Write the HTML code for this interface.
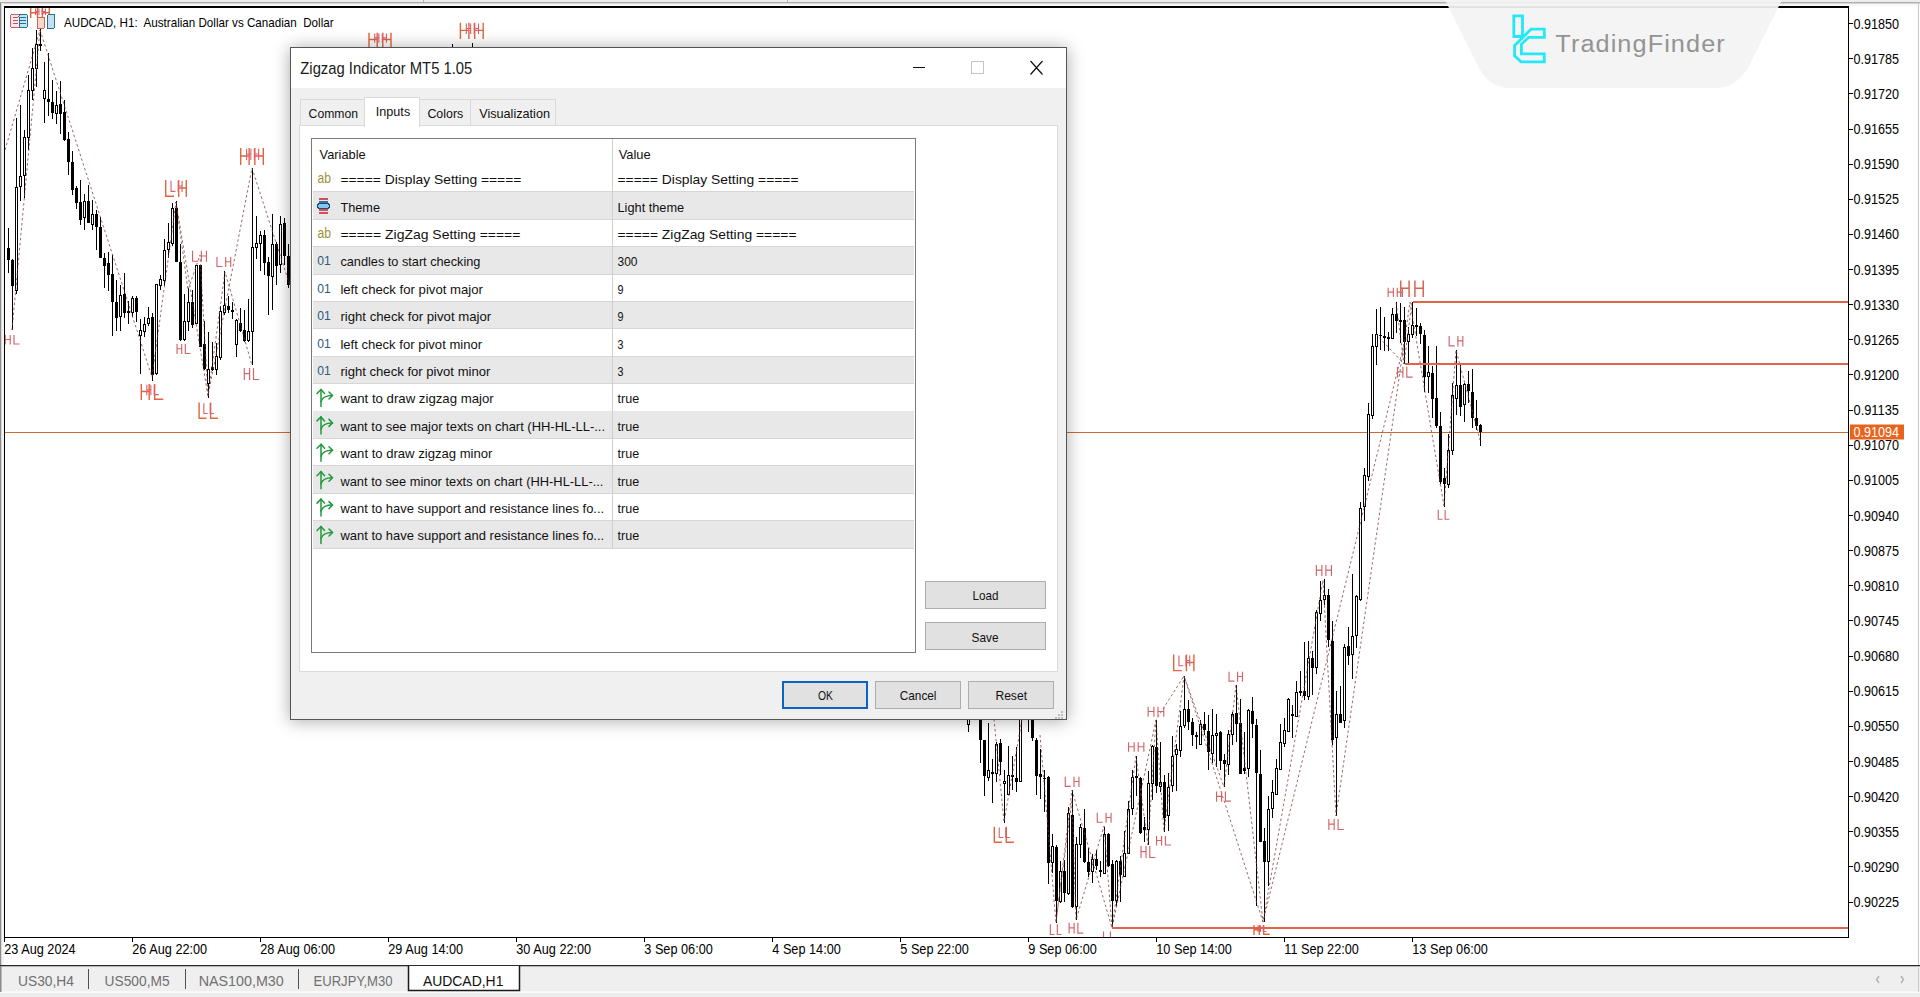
<!DOCTYPE html>
<html><head><meta charset="utf-8">
<style>
*{margin:0;padding:0;box-sizing:border-box}
html,body{width:1920px;height:997px;overflow:hidden;background:#fff;font-family:"Liberation Sans",sans-serif;position:relative}
.a{position:absolute}
</style></head><body>
<svg class="a" style="left:0;top:0" width="1920" height="997" viewBox="0 0 1920 997" font-family='"Liberation Sans", sans-serif'>
<rect x="0" y="0" width="1920" height="997" fill="#fff"/>
<rect x="0" y="0" width="1920" height="3" fill="#ededed"/>
<rect x="0" y="2.5" width="1920" height="1" fill="#707070"/>
<rect x="0" y="3.5" width="1920" height="2.5" fill="#f7f7f7"/>
<rect x="0" y="3" width="1.5" height="962" fill="#8a8a8a"/>
<rect x="1.5" y="3" width="2.5" height="962" fill="#f4f4f4"/>
<rect x="1918" y="3" width="1" height="962" fill="#c8c8c8"/>
<rect x="423" y="0" width="1" height="3" fill="#b0b0b0"/>
<rect x="787" y="0" width="1" height="3" fill="#b0b0b0"/>
<defs><clipPath id="cc"><rect x="5" y="7" width="1843" height="930"/></clipPath></defs>
<g clip-path="url(#cc)" shape-rendering="crispEdges">
<rect x="5" y="431.5" width="1843" height="1" fill="#cf6a35"/>
<rect x="8" y="228" width="1" height="45" fill="#000"/>
<rect x="7" y="248" width="3" height="12" fill="#000"/>
<rect x="12" y="259" width="1" height="71" fill="#000"/>
<rect x="11" y="260" width="3" height="26" fill="#000"/>
<rect x="16" y="118" width="1" height="176" fill="#000"/>
<rect x="15.5" y="187.5" width="2" height="103" fill="#fff" stroke="#000" stroke-width="1"/>
<rect x="20" y="105" width="1" height="96" fill="#000"/>
<rect x="19.5" y="176.5" width="2" height="10" fill="#fff" stroke="#000" stroke-width="1"/>
<rect x="24" y="130" width="1" height="68" fill="#000"/>
<rect x="23.5" y="137.5" width="2" height="38" fill="#fff" stroke="#000" stroke-width="1"/>
<rect x="28" y="75" width="1" height="75" fill="#000"/>
<rect x="27.5" y="90.5" width="2" height="47" fill="#fff" stroke="#000" stroke-width="1"/>
<rect x="32" y="48" width="1" height="52" fill="#000"/>
<rect x="31.5" y="68.5" width="2" height="22" fill="#fff" stroke="#000" stroke-width="1"/>
<rect x="36" y="30" width="1" height="57" fill="#000"/>
<rect x="35.5" y="44.5" width="2" height="24" fill="#fff" stroke="#000" stroke-width="1"/>
<rect x="40" y="28" width="1" height="23" fill="#000"/>
<rect x="39" y="44" width="3" height="2" fill="#000"/>
<rect x="44" y="62" width="1" height="61" fill="#000"/>
<rect x="43.5" y="90.5" width="2" height="8" fill="#fff" stroke="#000" stroke-width="1"/>
<rect x="48" y="53" width="1" height="63" fill="#000"/>
<rect x="47" y="99" width="3" height="3" fill="#000"/>
<rect x="52" y="80" width="1" height="39" fill="#000"/>
<rect x="51" y="102" width="3" height="11" fill="#000"/>
<rect x="56" y="91" width="1" height="33" fill="#000"/>
<rect x="55.5" y="105.5" width="2" height="8" fill="#fff" stroke="#000" stroke-width="1"/>
<rect x="60" y="81" width="1" height="53" fill="#000"/>
<rect x="59" y="104" width="3" height="10" fill="#000"/>
<rect x="64" y="100" width="1" height="41" fill="#000"/>
<rect x="63" y="112" width="3" height="28" fill="#000"/>
<rect x="68" y="132" width="1" height="43" fill="#000"/>
<rect x="67" y="139" width="3" height="23" fill="#000"/>
<rect x="72" y="151" width="1" height="44" fill="#000"/>
<rect x="71" y="162" width="3" height="28" fill="#000"/>
<rect x="76" y="186" width="1" height="23" fill="#000"/>
<rect x="75" y="188" width="3" height="15" fill="#000"/>
<rect x="80" y="180" width="1" height="45" fill="#000"/>
<rect x="79" y="202" width="3" height="18" fill="#000"/>
<rect x="84" y="194" width="1" height="36" fill="#000"/>
<rect x="83.5" y="201.5" width="2" height="16" fill="#fff" stroke="#000" stroke-width="1"/>
<rect x="88" y="185" width="1" height="38" fill="#000"/>
<rect x="87" y="201" width="3" height="22" fill="#000"/>
<rect x="92" y="200" width="1" height="30" fill="#000"/>
<rect x="91.5" y="214.5" width="2" height="10" fill="#fff" stroke="#000" stroke-width="1"/>
<rect x="96" y="210" width="1" height="40" fill="#000"/>
<rect x="95" y="214" width="3" height="13" fill="#000"/>
<rect x="100" y="217" width="1" height="41" fill="#000"/>
<rect x="99" y="227" width="3" height="31" fill="#000"/>
<rect x="104" y="253" width="1" height="35" fill="#000"/>
<rect x="103" y="258" width="3" height="8" fill="#000"/>
<rect x="108" y="252" width="1" height="39" fill="#000"/>
<rect x="107" y="263" width="3" height="12" fill="#000"/>
<rect x="112" y="255" width="1" height="81" fill="#000"/>
<rect x="111" y="274" width="3" height="28" fill="#000"/>
<rect x="116" y="280" width="1" height="51" fill="#000"/>
<rect x="115" y="302" width="3" height="16" fill="#000"/>
<rect x="120" y="285" width="1" height="46" fill="#000"/>
<rect x="119.5" y="295.5" width="2" height="21" fill="#fff" stroke="#000" stroke-width="1"/>
<rect x="124" y="273" width="1" height="45" fill="#000"/>
<rect x="123" y="294" width="3" height="19" fill="#000"/>
<rect x="128" y="301" width="1" height="23" fill="#000"/>
<rect x="127" y="311" width="3" height="2" fill="#000"/>
<rect x="132" y="296" width="1" height="21" fill="#000"/>
<rect x="131.5" y="298.5" width="2" height="14" fill="#fff" stroke="#000" stroke-width="1"/>
<rect x="136" y="296" width="1" height="26" fill="#000"/>
<rect x="135" y="298" width="3" height="14" fill="#000"/>
<rect x="140" y="319" width="1" height="55" fill="#000"/>
<rect x="139.5" y="330.5" width="2" height="5" fill="#fff" stroke="#000" stroke-width="1"/>
<rect x="144" y="317" width="1" height="20" fill="#000"/>
<rect x="143.5" y="324.5" width="2" height="7" fill="#fff" stroke="#000" stroke-width="1"/>
<rect x="148" y="307" width="1" height="19" fill="#000"/>
<rect x="147.5" y="318.5" width="2" height="5" fill="#fff" stroke="#000" stroke-width="1"/>
<rect x="152" y="313" width="1" height="68" fill="#000"/>
<rect x="151" y="317" width="3" height="58" fill="#000"/>
<rect x="156" y="284" width="1" height="91" fill="#000"/>
<rect x="155.5" y="284.5" width="2" height="89" fill="#fff" stroke="#000" stroke-width="1"/>
<rect x="160" y="275" width="1" height="15" fill="#000"/>
<rect x="159.5" y="279.5" width="2" height="6" fill="#fff" stroke="#000" stroke-width="1"/>
<rect x="164" y="239" width="1" height="47" fill="#000"/>
<rect x="163.5" y="250.5" width="2" height="30" fill="#fff" stroke="#000" stroke-width="1"/>
<rect x="168" y="223" width="1" height="35" fill="#000"/>
<rect x="167.5" y="242.5" width="2" height="7" fill="#fff" stroke="#000" stroke-width="1"/>
<rect x="172" y="203" width="1" height="43" fill="#000"/>
<rect x="171.5" y="208.5" width="2" height="35" fill="#fff" stroke="#000" stroke-width="1"/>
<rect x="176" y="201" width="1" height="61" fill="#000"/>
<rect x="175" y="208" width="3" height="54" fill="#000"/>
<rect x="180" y="244" width="1" height="97" fill="#000"/>
<rect x="179" y="262" width="3" height="78" fill="#000"/>
<rect x="184" y="294" width="1" height="47" fill="#000"/>
<rect x="183.5" y="321.5" width="2" height="18" fill="#fff" stroke="#000" stroke-width="1"/>
<rect x="188" y="288" width="1" height="43" fill="#000"/>
<rect x="187.5" y="302.5" width="2" height="19" fill="#fff" stroke="#000" stroke-width="1"/>
<rect x="192" y="290" width="1" height="38" fill="#000"/>
<rect x="191" y="302" width="3" height="23" fill="#000"/>
<rect x="196" y="265" width="1" height="59" fill="#000"/>
<rect x="195.5" y="265.5" width="2" height="58" fill="#fff" stroke="#000" stroke-width="1"/>
<rect x="200" y="265" width="1" height="82" fill="#000"/>
<rect x="199" y="265" width="3" height="82" fill="#000"/>
<rect x="204" y="321" width="1" height="49" fill="#000"/>
<rect x="203" y="344" width="3" height="25" fill="#000"/>
<rect x="208" y="332" width="1" height="66" fill="#000"/>
<rect x="207.5" y="369.5" width="2" height="14" fill="#fff" stroke="#000" stroke-width="1"/>
<rect x="212" y="342" width="1" height="29" fill="#000"/>
<rect x="211" y="367" width="3" height="3" fill="#000"/>
<rect x="216" y="343" width="1" height="32" fill="#000"/>
<rect x="215.5" y="356.5" width="2" height="13" fill="#fff" stroke="#000" stroke-width="1"/>
<rect x="220" y="306" width="1" height="54" fill="#000"/>
<rect x="219.5" y="311.5" width="2" height="46" fill="#fff" stroke="#000" stroke-width="1"/>
<rect x="224" y="271" width="1" height="44" fill="#000"/>
<rect x="223.5" y="305.5" width="2" height="7" fill="#fff" stroke="#000" stroke-width="1"/>
<rect x="228" y="296" width="1" height="17" fill="#000"/>
<rect x="227" y="306" width="3" height="4" fill="#000"/>
<rect x="232" y="302" width="1" height="17" fill="#000"/>
<rect x="231" y="310" width="3" height="2" fill="#000"/>
<rect x="236" y="319" width="1" height="38" fill="#000"/>
<rect x="235.5" y="320.5" width="2" height="24" fill="#fff" stroke="#000" stroke-width="1"/>
<rect x="240" y="308" width="1" height="24" fill="#000"/>
<rect x="239" y="323" width="3" height="8" fill="#000"/>
<rect x="244" y="310" width="1" height="32" fill="#000"/>
<rect x="243" y="330" width="3" height="11" fill="#000"/>
<rect x="248" y="299" width="1" height="43" fill="#000"/>
<rect x="247.5" y="331.5" width="2" height="9" fill="#fff" stroke="#000" stroke-width="1"/>
<rect x="252" y="168" width="1" height="197" fill="#000"/>
<rect x="251.5" y="247.5" width="2" height="84" fill="#fff" stroke="#000" stroke-width="1"/>
<rect x="256" y="216" width="1" height="43" fill="#000"/>
<rect x="255.5" y="243.5" width="2" height="4" fill="#fff" stroke="#000" stroke-width="1"/>
<rect x="260" y="231" width="1" height="40" fill="#000"/>
<rect x="259.5" y="235.5" width="2" height="8" fill="#fff" stroke="#000" stroke-width="1"/>
<rect x="264" y="230" width="1" height="45" fill="#000"/>
<rect x="263" y="235" width="3" height="28" fill="#000"/>
<rect x="268" y="257" width="1" height="58" fill="#000"/>
<rect x="267" y="262" width="3" height="14" fill="#000"/>
<rect x="272" y="214" width="1" height="96" fill="#000"/>
<rect x="271.5" y="244.5" width="2" height="32" fill="#fff" stroke="#000" stroke-width="1"/>
<rect x="276" y="242" width="1" height="43" fill="#000"/>
<rect x="275" y="244" width="3" height="22" fill="#000"/>
<rect x="280" y="216" width="1" height="57" fill="#000"/>
<rect x="279.5" y="224.5" width="2" height="40" fill="#fff" stroke="#000" stroke-width="1"/>
<rect x="284" y="218" width="1" height="47" fill="#000"/>
<rect x="283" y="223" width="3" height="33" fill="#000"/>
<rect x="288" y="244" width="1" height="44" fill="#000"/>
<rect x="287" y="256" width="3" height="29" fill="#000"/>
<rect x="968" y="700" width="1" height="32" fill="#000"/>
<rect x="967.5" y="700.5" width="2" height="24" fill="#fff" stroke="#000" stroke-width="1"/>
<rect x="980" y="700" width="1" height="63" fill="#000"/>
<rect x="979" y="700" width="3" height="40" fill="#000"/>
<rect x="984" y="740" width="1" height="56" fill="#000"/>
<rect x="983" y="740" width="3" height="36" fill="#000"/>
<rect x="988" y="723" width="1" height="58" fill="#000"/>
<rect x="987.5" y="770.5" width="2" height="7" fill="#fff" stroke="#000" stroke-width="1"/>
<rect x="992" y="759" width="1" height="44" fill="#000"/>
<rect x="991" y="772" width="3" height="2" fill="#000"/>
<rect x="996" y="742" width="1" height="40" fill="#000"/>
<rect x="995.5" y="744.5" width="2" height="29" fill="#fff" stroke="#000" stroke-width="1"/>
<rect x="1000" y="739" width="1" height="36" fill="#000"/>
<rect x="999" y="743" width="3" height="19" fill="#000"/>
<rect x="1004" y="770" width="1" height="53" fill="#000"/>
<rect x="1003.5" y="781.5" width="2" height="2" fill="#fff" stroke="#000" stroke-width="1"/>
<rect x="1008" y="746" width="1" height="49" fill="#000"/>
<rect x="1007.5" y="775.5" width="2" height="19" fill="#fff" stroke="#000" stroke-width="1"/>
<rect x="1012" y="756" width="1" height="34" fill="#000"/>
<rect x="1011" y="775" width="3" height="2" fill="#000"/>
<rect x="1016" y="747" width="1" height="45" fill="#000"/>
<rect x="1015" y="778" width="3" height="4" fill="#000"/>
<rect x="1020" y="700" width="1" height="82" fill="#000"/>
<rect x="1019.5" y="700.5" width="2" height="81" fill="#fff" stroke="#000" stroke-width="1"/>
<rect x="1028" y="690" width="1" height="42" fill="#000"/>
<rect x="1027.5" y="700.5" width="2" height="14" fill="#fff" stroke="#000" stroke-width="1"/>
<rect x="1032" y="690" width="1" height="51" fill="#000"/>
<rect x="1031" y="700" width="3" height="38" fill="#000"/>
<rect x="1036" y="738" width="1" height="57" fill="#000"/>
<rect x="1035" y="740" width="3" height="36" fill="#000"/>
<rect x="1040" y="749" width="1" height="50" fill="#000"/>
<rect x="1039" y="774" width="3" height="3" fill="#000"/>
<rect x="1044" y="770" width="1" height="42" fill="#000"/>
<rect x="1043" y="778" width="3" height="1" fill="#000"/>
<rect x="1048" y="776" width="1" height="108" fill="#000"/>
<rect x="1047" y="777" width="3" height="86" fill="#000"/>
<rect x="1052" y="834" width="1" height="39" fill="#000"/>
<rect x="1051.5" y="846.5" width="2" height="16" fill="#fff" stroke="#000" stroke-width="1"/>
<rect x="1056" y="845" width="1" height="78" fill="#000"/>
<rect x="1055" y="847" width="3" height="54" fill="#000"/>
<rect x="1060" y="861" width="1" height="42" fill="#000"/>
<rect x="1059.5" y="871.5" width="2" height="30" fill="#fff" stroke="#000" stroke-width="1"/>
<rect x="1064" y="860" width="1" height="42" fill="#000"/>
<rect x="1063" y="871" width="3" height="22" fill="#000"/>
<rect x="1068" y="807" width="1" height="88" fill="#000"/>
<rect x="1067.5" y="813.5" width="2" height="80" fill="#fff" stroke="#000" stroke-width="1"/>
<rect x="1072" y="790" width="1" height="118" fill="#000"/>
<rect x="1071" y="815" width="3" height="92" fill="#000"/>
<rect x="1076" y="837" width="1" height="83" fill="#000"/>
<rect x="1075.5" y="844.5" width="2" height="62" fill="#fff" stroke="#000" stroke-width="1"/>
<rect x="1080" y="824" width="1" height="34" fill="#000"/>
<rect x="1079.5" y="827.5" width="2" height="17" fill="#fff" stroke="#000" stroke-width="1"/>
<rect x="1084" y="809" width="1" height="54" fill="#000"/>
<rect x="1083" y="828" width="3" height="34" fill="#000"/>
<rect x="1088" y="848" width="1" height="29" fill="#000"/>
<rect x="1087" y="862" width="3" height="10" fill="#000"/>
<rect x="1092" y="854" width="1" height="29" fill="#000"/>
<rect x="1091.5" y="859.5" width="2" height="12" fill="#fff" stroke="#000" stroke-width="1"/>
<rect x="1096" y="850" width="1" height="20" fill="#000"/>
<rect x="1095" y="859" width="3" height="7" fill="#000"/>
<rect x="1100" y="861" width="1" height="16" fill="#000"/>
<rect x="1099" y="870" width="3" height="2" fill="#000"/>
<rect x="1104" y="827" width="1" height="47" fill="#000"/>
<rect x="1103.5" y="834.5" width="2" height="39" fill="#fff" stroke="#000" stroke-width="1"/>
<rect x="1108" y="833" width="1" height="34" fill="#000"/>
<rect x="1107" y="834" width="3" height="32" fill="#000"/>
<rect x="1112" y="860" width="1" height="68" fill="#000"/>
<rect x="1111" y="864" width="3" height="37" fill="#000"/>
<rect x="1116" y="860" width="1" height="46" fill="#000"/>
<rect x="1115.5" y="861.5" width="2" height="39" fill="#fff" stroke="#000" stroke-width="1"/>
<rect x="1120" y="856" width="1" height="46" fill="#000"/>
<rect x="1119" y="861" width="3" height="14" fill="#000"/>
<rect x="1124" y="831" width="1" height="46" fill="#000"/>
<rect x="1123.5" y="853.5" width="2" height="23" fill="#fff" stroke="#000" stroke-width="1"/>
<rect x="1128" y="801" width="1" height="53" fill="#000"/>
<rect x="1127.5" y="809.5" width="2" height="44" fill="#fff" stroke="#000" stroke-width="1"/>
<rect x="1132" y="770" width="1" height="45" fill="#000"/>
<rect x="1131.5" y="777.5" width="2" height="31" fill="#fff" stroke="#000" stroke-width="1"/>
<rect x="1136" y="756" width="1" height="40" fill="#000"/>
<rect x="1135" y="776" width="3" height="2" fill="#000"/>
<rect x="1140" y="777" width="1" height="57" fill="#000"/>
<rect x="1139" y="778" width="3" height="55" fill="#000"/>
<rect x="1144" y="817" width="1" height="25" fill="#000"/>
<rect x="1143" y="827" width="3" height="3" fill="#000"/>
<rect x="1148" y="771" width="1" height="74" fill="#000"/>
<rect x="1147.5" y="783.5" width="2" height="46" fill="#fff" stroke="#000" stroke-width="1"/>
<rect x="1152" y="745" width="1" height="55" fill="#000"/>
<rect x="1151.5" y="746.5" width="2" height="37" fill="#fff" stroke="#000" stroke-width="1"/>
<rect x="1156" y="720" width="1" height="73" fill="#000"/>
<rect x="1155" y="747" width="3" height="39" fill="#000"/>
<rect x="1160" y="742" width="1" height="50" fill="#000"/>
<rect x="1159.5" y="782.5" width="2" height="4" fill="#fff" stroke="#000" stroke-width="1"/>
<rect x="1164" y="775" width="1" height="57" fill="#000"/>
<rect x="1163" y="782" width="3" height="36" fill="#000"/>
<rect x="1168" y="773" width="1" height="58" fill="#000"/>
<rect x="1167.5" y="787.5" width="2" height="28" fill="#fff" stroke="#000" stroke-width="1"/>
<rect x="1172" y="736" width="1" height="56" fill="#000"/>
<rect x="1171.5" y="756.5" width="2" height="29" fill="#fff" stroke="#000" stroke-width="1"/>
<rect x="1176" y="744" width="1" height="47" fill="#000"/>
<rect x="1175.5" y="749.5" width="2" height="5" fill="#fff" stroke="#000" stroke-width="1"/>
<rect x="1180" y="711" width="1" height="46" fill="#000"/>
<rect x="1179.5" y="726.5" width="2" height="24" fill="#fff" stroke="#000" stroke-width="1"/>
<rect x="1184" y="676" width="1" height="52" fill="#000"/>
<rect x="1183.5" y="709.5" width="2" height="16" fill="#fff" stroke="#000" stroke-width="1"/>
<rect x="1188" y="700" width="1" height="30" fill="#000"/>
<rect x="1187" y="709" width="3" height="13" fill="#000"/>
<rect x="1192" y="718" width="1" height="28" fill="#000"/>
<rect x="1191" y="722" width="3" height="13" fill="#000"/>
<rect x="1196" y="732" width="1" height="17" fill="#000"/>
<rect x="1195" y="735" width="3" height="2" fill="#000"/>
<rect x="1200" y="720" width="1" height="25" fill="#000"/>
<rect x="1199.5" y="724.5" width="2" height="20" fill="#fff" stroke="#000" stroke-width="1"/>
<rect x="1204" y="712" width="1" height="23" fill="#000"/>
<rect x="1203" y="724" width="3" height="6" fill="#000"/>
<rect x="1208" y="715" width="1" height="55" fill="#000"/>
<rect x="1207" y="731" width="3" height="21" fill="#000"/>
<rect x="1212" y="709" width="1" height="54" fill="#000"/>
<rect x="1211.5" y="735.5" width="2" height="18" fill="#fff" stroke="#000" stroke-width="1"/>
<rect x="1216" y="714" width="1" height="53" fill="#000"/>
<rect x="1215.5" y="733.5" width="2" height="2" fill="#fff" stroke="#000" stroke-width="1"/>
<rect x="1220" y="731" width="1" height="39" fill="#000"/>
<rect x="1219" y="732" width="3" height="29" fill="#000"/>
<rect x="1224" y="754" width="1" height="33" fill="#000"/>
<rect x="1223" y="760" width="3" height="4" fill="#000"/>
<rect x="1228" y="730" width="1" height="45" fill="#000"/>
<rect x="1227.5" y="734.5" width="2" height="30" fill="#fff" stroke="#000" stroke-width="1"/>
<rect x="1232" y="712" width="1" height="33" fill="#000"/>
<rect x="1231.5" y="714.5" width="2" height="20" fill="#fff" stroke="#000" stroke-width="1"/>
<rect x="1236" y="685" width="1" height="57" fill="#000"/>
<rect x="1235" y="713" width="3" height="11" fill="#000"/>
<rect x="1240" y="699" width="1" height="75" fill="#000"/>
<rect x="1239" y="723" width="3" height="51" fill="#000"/>
<rect x="1244" y="732" width="1" height="42" fill="#000"/>
<rect x="1243" y="768" width="3" height="3" fill="#000"/>
<rect x="1248" y="709" width="1" height="68" fill="#000"/>
<rect x="1247.5" y="710.5" width="2" height="58" fill="#fff" stroke="#000" stroke-width="1"/>
<rect x="1252" y="697" width="1" height="41" fill="#000"/>
<rect x="1251" y="711" width="3" height="13" fill="#000"/>
<rect x="1256" y="719" width="1" height="187" fill="#000"/>
<rect x="1255" y="725" width="3" height="48" fill="#000"/>
<rect x="1260" y="750" width="1" height="92" fill="#000"/>
<rect x="1259" y="774" width="3" height="68" fill="#000"/>
<rect x="1264" y="828" width="1" height="94" fill="#000"/>
<rect x="1263" y="841" width="3" height="21" fill="#000"/>
<rect x="1268" y="796" width="1" height="90" fill="#000"/>
<rect x="1267.5" y="809.5" width="2" height="52" fill="#fff" stroke="#000" stroke-width="1"/>
<rect x="1272" y="780" width="1" height="38" fill="#000"/>
<rect x="1271.5" y="792.5" width="2" height="16" fill="#fff" stroke="#000" stroke-width="1"/>
<rect x="1276" y="759" width="1" height="36" fill="#000"/>
<rect x="1275.5" y="768.5" width="2" height="26" fill="#fff" stroke="#000" stroke-width="1"/>
<rect x="1280" y="724" width="1" height="46" fill="#000"/>
<rect x="1279.5" y="742.5" width="2" height="27" fill="#fff" stroke="#000" stroke-width="1"/>
<rect x="1284" y="718" width="1" height="29" fill="#000"/>
<rect x="1283.5" y="730.5" width="2" height="13" fill="#fff" stroke="#000" stroke-width="1"/>
<rect x="1288" y="698" width="1" height="34" fill="#000"/>
<rect x="1287.5" y="699.5" width="2" height="32" fill="#fff" stroke="#000" stroke-width="1"/>
<rect x="1292" y="705" width="1" height="33" fill="#000"/>
<rect x="1291" y="714" width="3" height="2" fill="#000"/>
<rect x="1296" y="681" width="1" height="36" fill="#000"/>
<rect x="1295.5" y="692.5" width="2" height="24" fill="#fff" stroke="#000" stroke-width="1"/>
<rect x="1300" y="671" width="1" height="25" fill="#000"/>
<rect x="1299" y="691" width="3" height="2" fill="#000"/>
<rect x="1304" y="642" width="1" height="58" fill="#000"/>
<rect x="1303" y="691" width="3" height="5" fill="#000"/>
<rect x="1308" y="641" width="1" height="59" fill="#000"/>
<rect x="1307.5" y="658.5" width="2" height="38" fill="#fff" stroke="#000" stroke-width="1"/>
<rect x="1312" y="651" width="1" height="44" fill="#000"/>
<rect x="1311" y="658" width="3" height="10" fill="#000"/>
<rect x="1316" y="610" width="1" height="64" fill="#000"/>
<rect x="1315.5" y="612.5" width="2" height="55" fill="#fff" stroke="#000" stroke-width="1"/>
<rect x="1320" y="581" width="1" height="40" fill="#000"/>
<rect x="1319.5" y="600.5" width="2" height="13" fill="#fff" stroke="#000" stroke-width="1"/>
<rect x="1324" y="579" width="1" height="26" fill="#000"/>
<rect x="1323.5" y="595.5" width="2" height="4" fill="#fff" stroke="#000" stroke-width="1"/>
<rect x="1328" y="589" width="1" height="58" fill="#000"/>
<rect x="1327" y="595" width="3" height="45" fill="#000"/>
<rect x="1332" y="621" width="1" height="124" fill="#000"/>
<rect x="1331" y="641" width="3" height="99" fill="#000"/>
<rect x="1336" y="691" width="1" height="125" fill="#000"/>
<rect x="1335.5" y="714.5" width="2" height="23" fill="#fff" stroke="#000" stroke-width="1"/>
<rect x="1340" y="686" width="1" height="37" fill="#000"/>
<rect x="1339" y="714" width="3" height="9" fill="#000"/>
<rect x="1344" y="644" width="1" height="84" fill="#000"/>
<rect x="1343.5" y="647.5" width="2" height="73" fill="#fff" stroke="#000" stroke-width="1"/>
<rect x="1348" y="627" width="1" height="38" fill="#000"/>
<rect x="1347" y="646" width="3" height="10" fill="#000"/>
<rect x="1352" y="574" width="1" height="105" fill="#000"/>
<rect x="1351.5" y="636.5" width="2" height="18" fill="#fff" stroke="#000" stroke-width="1"/>
<rect x="1356" y="595" width="1" height="53" fill="#000"/>
<rect x="1355.5" y="596.5" width="2" height="39" fill="#fff" stroke="#000" stroke-width="1"/>
<rect x="1360" y="502" width="1" height="99" fill="#000"/>
<rect x="1359.5" y="508.5" width="2" height="91" fill="#fff" stroke="#000" stroke-width="1"/>
<rect x="1364" y="468" width="1" height="53" fill="#000"/>
<rect x="1363.5" y="475.5" width="2" height="31" fill="#fff" stroke="#000" stroke-width="1"/>
<rect x="1368" y="403" width="1" height="78" fill="#000"/>
<rect x="1367.5" y="414.5" width="2" height="62" fill="#fff" stroke="#000" stroke-width="1"/>
<rect x="1372" y="334" width="1" height="85" fill="#000"/>
<rect x="1371.5" y="346.5" width="2" height="69" fill="#fff" stroke="#000" stroke-width="1"/>
<rect x="1376" y="309" width="1" height="56" fill="#000"/>
<rect x="1375.5" y="334.5" width="2" height="12" fill="#fff" stroke="#000" stroke-width="1"/>
<rect x="1380" y="307" width="1" height="43" fill="#000"/>
<rect x="1379" y="335" width="3" height="1" fill="#000"/>
<rect x="1384" y="317" width="1" height="34" fill="#000"/>
<rect x="1383" y="336" width="3" height="2" fill="#000"/>
<rect x="1388" y="332" width="1" height="19" fill="#000"/>
<rect x="1387" y="337" width="3" height="2" fill="#000"/>
<rect x="1392" y="308" width="1" height="31" fill="#000"/>
<rect x="1391.5" y="314.5" width="2" height="24" fill="#fff" stroke="#000" stroke-width="1"/>
<rect x="1396" y="302" width="1" height="31" fill="#000"/>
<rect x="1395" y="314" width="3" height="7" fill="#000"/>
<rect x="1400" y="303" width="1" height="40" fill="#000"/>
<rect x="1399" y="320" width="3" height="2" fill="#000"/>
<rect x="1404" y="307" width="1" height="57" fill="#000"/>
<rect x="1403" y="320" width="3" height="22" fill="#000"/>
<rect x="1408" y="327" width="1" height="36" fill="#000"/>
<rect x="1407.5" y="334.5" width="2" height="7" fill="#fff" stroke="#000" stroke-width="1"/>
<rect x="1412" y="302" width="1" height="36" fill="#000"/>
<rect x="1411.5" y="325.5" width="2" height="9" fill="#fff" stroke="#000" stroke-width="1"/>
<rect x="1416" y="308" width="1" height="28" fill="#000"/>
<rect x="1415" y="325" width="3" height="2" fill="#000"/>
<rect x="1420" y="323" width="1" height="21" fill="#000"/>
<rect x="1419" y="326" width="3" height="8" fill="#000"/>
<rect x="1424" y="330" width="1" height="62" fill="#000"/>
<rect x="1423" y="335" width="3" height="42" fill="#000"/>
<rect x="1428" y="346" width="1" height="47" fill="#000"/>
<rect x="1427.5" y="372.5" width="2" height="4" fill="#fff" stroke="#000" stroke-width="1"/>
<rect x="1432" y="366" width="1" height="52" fill="#000"/>
<rect x="1431" y="373" width="3" height="26" fill="#000"/>
<rect x="1436" y="346" width="1" height="82" fill="#000"/>
<rect x="1435" y="398" width="3" height="28" fill="#000"/>
<rect x="1440" y="412" width="1" height="72" fill="#000"/>
<rect x="1439" y="426" width="3" height="56" fill="#000"/>
<rect x="1444" y="468" width="1" height="39" fill="#000"/>
<rect x="1443" y="478" width="3" height="6" fill="#000"/>
<rect x="1448" y="434" width="1" height="54" fill="#000"/>
<rect x="1447.5" y="450.5" width="2" height="34" fill="#fff" stroke="#000" stroke-width="1"/>
<rect x="1452" y="383" width="1" height="72" fill="#000"/>
<rect x="1451.5" y="395.5" width="2" height="55" fill="#fff" stroke="#000" stroke-width="1"/>
<rect x="1456" y="350" width="1" height="65" fill="#000"/>
<rect x="1455.5" y="385.5" width="2" height="13" fill="#fff" stroke="#000" stroke-width="1"/>
<rect x="1460" y="364" width="1" height="52" fill="#000"/>
<rect x="1459" y="385" width="3" height="22" fill="#000"/>
<rect x="1464" y="383" width="1" height="39" fill="#000"/>
<rect x="1463.5" y="384.5" width="2" height="20" fill="#fff" stroke="#000" stroke-width="1"/>
<rect x="1468" y="371" width="1" height="32" fill="#000"/>
<rect x="1467" y="384" width="3" height="7" fill="#000"/>
<rect x="1472" y="369" width="1" height="59" fill="#000"/>
<rect x="1471" y="392" width="3" height="26" fill="#000"/>
<rect x="1476" y="400" width="1" height="30" fill="#000"/>
<rect x="1475" y="418" width="3" height="8" fill="#000"/>
<rect x="1480" y="424" width="1" height="22" fill="#000"/>
<rect x="1479" y="425" width="3" height="7" fill="#000"/>
<rect x="452" y="44" width="1" height="4" fill="#000"/><rect x="472" y="43" width="1" height="5" fill="#000"/>
</g>
<g fill="none" stroke="#7c3a3a" stroke-width="0.9" stroke-dasharray="2.5,2.5" opacity="0.85">
<path d="M5,150 L40,30 L152,377 L176,202 L208,396 L252,168 L292,292"/>
<path d="M12,330 L40,30"/>
<path d="M176,202 L188,290 L200,255 L208,396 L225,272 L252,365"/>
<path d="M994,719 L1004,822 L1022,719"/>
<path d="M1040,735 L1056,922 L1072,790 L1112,928 L1156,720 L1184,676 L1263,922 L1323,580 L1336,816 L1410,302 L1444,506 L1456,350 L1480,440"/>
<path d="M1056,922 L1072,800 L1076,920 L1104,826 L1112,928 L1136,756 L1148,845 L1156,720 L1164,832 L1184,676 L1224,787 L1236,685 L1263,922 L1404,344 L1404,364 L1412,302"/>
<path d="M1376,334 L1404,364 L1396,302"/>
</g>
<g shape-rendering="crispEdges">
<rect x="1413" y="300.5" width="435" height="2" fill="#e06448"/>
<rect x="1405" y="363" width="443" height="2" fill="#e06448"/>
<rect x="1112" y="927" width="736" height="2" fill="#e06448"/>
</g>
<g clip-path="url(#cc)" fill="none">
<path d="M30.70,8.00V18.00M37.50,8.00V18.00M30.70,12.70H37.50M42.50,8.00V18.00M49.30,8.00V18.00M42.50,12.70H49.30" stroke="#e2643c" stroke-width="1.4"/>
<path d="M35.55,8.50V15.00M38.96,8.50V15.00M35.55,11.55H38.96M42.04,8.50V15.00M45.45,8.50V15.00M42.04,11.55H45.45" stroke="#d86070" stroke-width="1.1"/>
<path d="M5.25,335.00V344.50M10.22,335.00V344.50M5.25,339.46H10.22M13.98,335.00V343.95H19.50" stroke="#d46468" stroke-width="1.15"/>
<path d="M165.70,180.00V196.30H174.02M178.68,180.00V197.00M186.30,180.00V197.00M178.68,187.99H186.30" stroke="#e2643c" stroke-width="1.4"/>
<path d="M171.05,180.85V191.35H175.46M178.19,180.85V191.90M182.05,180.85V191.90M178.19,186.04H182.05" stroke="#d86070" stroke-width="1.1"/>
<path d="M240.70,148.00V165.00M249.14,148.00V165.00M240.70,155.99H249.14M254.86,148.00V165.00M263.30,148.00V165.00M254.86,155.99H263.30" stroke="#e2643c" stroke-width="1.4"/>
<path d="M246.55,148.85V159.90M250.86,148.85V159.90M246.55,154.04H250.86M254.34,148.85V159.90M258.65,148.85V159.90M254.34,154.04H258.65" stroke="#d86070" stroke-width="1.1"/>
<path d="M177.05,344.00V354.00M181.69,344.00V354.00M177.05,348.70H181.69M185.31,344.00V353.45H190.50" stroke="#d46468" stroke-width="1.15"/>
<path d="M141.30,384.00V400.00M149.21,384.00V400.00M141.30,391.52H149.21M154.69,384.00V399.30H163.30" stroke="#e2643c" stroke-width="1.4"/>
<path d="M146.83,384.80V395.20M150.84,384.80V395.20M146.83,389.69H150.84M154.19,384.80V394.65H158.76" stroke="#d86070" stroke-width="1.1"/>
<path d="M199.10,402.50V418.30H206.44M210.66,402.50V418.30H218.00" stroke="#e2643c" stroke-width="1.4"/>
<path d="M203.85,403.32V413.50H207.72M210.21,403.32V413.50H214.08" stroke="#d86070" stroke-width="1.1"/>
<path d="M244.30,368.00V380.00M249.60,368.00V380.00M244.30,373.64H249.60M253.50,368.00V379.45H259.35" stroke="#d46468" stroke-width="1.15"/>
<path d="M192.55,250.80V261.25H198.15M201.40,250.80V261.80M206.45,250.80V261.80M201.40,255.97H206.45" stroke="#d46468" stroke-width="1.15"/>
<path d="M216.95,257.00V266.45H222.49M225.71,257.00V267.00M230.70,257.00V267.00M225.71,261.70H230.70" stroke="#d46468" stroke-width="1.15"/>
<path d="M369.00,32.80V47.00M377.19,32.80V47.00M369.00,39.47H377.19M382.81,32.80V47.00M391.00,32.80V47.00M382.81,39.47H391.00" stroke="#e2643c" stroke-width="1.4"/>
<path d="M374.70,33.51V42.74M378.88,33.51V42.74M374.70,37.85H378.88M382.29,33.51V42.74M386.47,33.51V42.74M382.29,37.85H386.47" stroke="#d86070" stroke-width="1.1"/>
<path d="M460.40,22.70V39.00M468.92,22.70V39.00M460.40,30.36H468.92M474.68,22.70V39.00M483.20,22.70V39.00M474.68,30.36H483.20" stroke="#e2643c" stroke-width="1.4"/>
<path d="M466.30,23.52V34.11M470.66,23.52V34.11M466.30,28.49H470.66M474.15,23.52V34.11M478.51,23.52V34.11M474.15,28.49H478.51" stroke="#d86070" stroke-width="1.1"/>
<path d="M994.30,826.70V842.30H1001.92M1006.28,826.70V842.30H1013.90" stroke="#e2643c" stroke-width="1.4"/>
<path d="M999.23,827.52V837.56H1003.25M1005.81,827.52V837.56H1009.84" stroke="#d86070" stroke-width="1.1"/>
<path d="M1065.25,776.70V786.35H1070.77M1073.98,776.70V786.90M1078.95,776.70V786.90M1073.98,781.49H1078.95" stroke="#d46468" stroke-width="1.15"/>
<path d="M1097.25,812.70V822.25H1102.81M1106.04,812.70V822.80M1111.05,812.70V822.80M1106.04,817.45H1111.05" stroke="#d46468" stroke-width="1.15"/>
<path d="M1128.55,742.30V751.70M1134.17,742.30V751.70M1128.55,746.72H1134.17M1138.23,742.30V751.70M1143.85,742.30V751.70M1138.23,746.72H1143.85" stroke="#d46468" stroke-width="1.15"/>
<path d="M1141.05,846.00V858.00M1146.02,846.00V858.00M1141.05,851.64H1146.02M1149.78,846.00V857.45H1155.30" stroke="#d46468" stroke-width="1.15"/>
<path d="M1156.55,836.00V845.50M1161.60,836.00V845.50M1156.55,840.47H1161.60M1165.40,836.00V844.95H1171.00" stroke="#d46468" stroke-width="1.15"/>
<path d="M1216.55,791.60V801.70M1221.60,791.60V801.70M1216.55,796.35H1221.60M1225.40,791.60V801.15H1231.00" stroke="#d46468" stroke-width="1.15"/>
<path d="M1148.15,706.80V716.70M1153.90,706.80V716.70M1148.15,711.45H1153.90M1158.00,706.80V716.70M1163.75,706.80V716.70M1158.00,711.45H1163.75" stroke="#d46468" stroke-width="1.15"/>
<path d="M1050.35,924.20V934.45H1054.64M1057.31,924.20V934.45H1061.60" stroke="#d46468" stroke-width="1.15"/>
<path d="M1069.15,922.70V933.60M1074.12,922.70V933.60M1069.15,927.82H1074.12M1077.88,922.70V933.05H1083.40" stroke="#d46468" stroke-width="1.15"/>
<path d="M1103.55,931.50V940.95H1107.80M1110.45,931.50V940.95H1114.70" stroke="#d46468" stroke-width="1.15"/>
<path d="M1254.00,925.00V935.00M1259.32,925.00V935.00M1254.00,929.70H1259.32M1263.68,925.00V934.30H1269.70" stroke="#e2643c" stroke-width="1.4"/>
<path d="M1257.95,925.50V932.00M1260.55,925.50V932.00M1257.95,928.55H1260.55M1263.27,925.50V931.45H1266.42" stroke="#d86070" stroke-width="1.1"/>
<path d="M1328.85,819.00V830.00M1334.19,819.00V830.00M1328.85,824.17H1334.19M1338.11,819.00V829.45H1344.00" stroke="#d46468" stroke-width="1.15"/>
<path d="M1316.35,565.00V576.00M1321.89,565.00V576.00M1316.35,570.17H1321.89M1325.91,565.00V576.00M1331.45,565.00V576.00M1325.91,570.17H1331.45" stroke="#d46468" stroke-width="1.15"/>
<path d="M1438.25,509.70V519.25H1442.50M1445.15,509.70V519.25H1449.40" stroke="#d46468" stroke-width="1.15"/>
<path d="M1397.55,366.70V377.70M1402.89,366.70V377.70M1397.55,371.87H1402.89M1406.81,366.70V377.15H1412.70" stroke="#d46468" stroke-width="1.15"/>
<path d="M1449.15,336.00V345.85H1454.67M1457.88,336.00V346.40M1462.85,336.00V346.40M1457.88,340.89H1462.85" stroke="#d46468" stroke-width="1.15"/>
<path d="M1400.75,280.40V297.00M1409.09,280.40V297.00M1400.75,288.20H1409.09M1414.91,280.40V297.00M1423.25,280.40V297.00M1414.91,288.20H1423.25" stroke="#dc6450" stroke-width="1.5"/>
<path d="M1388.15,287.70V297.00M1393.36,287.70V297.00M1388.15,292.07H1393.36M1397.24,287.70V297.00M1402.45,287.70V297.00M1397.24,292.07H1402.45" stroke="#d46468" stroke-width="1.15"/>
<path d="M1173.70,654.60V670.60H1181.86M1186.44,654.60V671.30M1193.90,654.60V671.30M1186.44,662.45H1193.90" stroke="#e2643c" stroke-width="1.4"/>
<path d="M1178.95,655.44V665.74H1183.27M1185.96,655.44V666.29M1189.73,655.44V666.29M1185.96,660.54H1189.73" stroke="#d86070" stroke-width="1.1"/>
<path d="M1229.05,671.80V681.15H1234.44M1237.61,671.80V681.70M1242.45,671.80V681.70M1237.61,676.45H1242.45" stroke="#d46468" stroke-width="1.15"/>
</g>
<g shape-rendering="crispEdges" fill="#000">
<rect x="4" y="6" width="1845" height="1.5"/>
<rect x="4" y="6" width="1" height="932"/>
<rect x="1848" y="6" width="1" height="932"/>
<rect x="4" y="937" width="1845" height="1"/>
</g>
<g shape-rendering="crispEdges">
<rect x="1849" y="23" width="4" height="1" fill="#000"/>
<rect x="1849" y="58" width="4" height="1" fill="#000"/>
<rect x="1849" y="93" width="4" height="1" fill="#000"/>
<rect x="1849" y="129" width="4" height="1" fill="#000"/>
<rect x="1849" y="164" width="4" height="1" fill="#000"/>
<rect x="1849" y="199" width="4" height="1" fill="#000"/>
<rect x="1849" y="234" width="4" height="1" fill="#000"/>
<rect x="1849" y="269" width="4" height="1" fill="#000"/>
<rect x="1849" y="304" width="4" height="1" fill="#000"/>
<rect x="1849" y="339" width="4" height="1" fill="#000"/>
<rect x="1849" y="374" width="4" height="1" fill="#000"/>
<rect x="1849" y="410" width="4" height="1" fill="#000"/>
<rect x="1849" y="445" width="4" height="1" fill="#000"/>
<rect x="1849" y="480" width="4" height="1" fill="#000"/>
<rect x="1849" y="515" width="4" height="1" fill="#000"/>
<rect x="1849" y="550" width="4" height="1" fill="#000"/>
<rect x="1849" y="585" width="4" height="1" fill="#000"/>
<rect x="1849" y="620" width="4" height="1" fill="#000"/>
<rect x="1849" y="656" width="4" height="1" fill="#000"/>
<rect x="1849" y="691" width="4" height="1" fill="#000"/>
<rect x="1849" y="726" width="4" height="1" fill="#000"/>
<rect x="1849" y="761" width="4" height="1" fill="#000"/>
<rect x="1849" y="796" width="4" height="1" fill="#000"/>
<rect x="1849" y="831" width="4" height="1" fill="#000"/>
<rect x="1849" y="866" width="4" height="1" fill="#000"/>
<rect x="1849" y="902" width="4" height="1" fill="#000"/>
</g>
<text x="1853.5" y="28.6" font-size="14" fill="#000" textLength="45.5" lengthAdjust="spacingAndGlyphs">0.91850</text>
<text x="1853.5" y="63.7" font-size="14" fill="#000" textLength="45.5" lengthAdjust="spacingAndGlyphs">0.91785</text>
<text x="1853.5" y="98.9" font-size="14" fill="#000" textLength="45.5" lengthAdjust="spacingAndGlyphs">0.91720</text>
<text x="1853.5" y="134.0" font-size="14" fill="#000" textLength="45.5" lengthAdjust="spacingAndGlyphs">0.91655</text>
<text x="1853.5" y="169.2" font-size="14" fill="#000" textLength="45.5" lengthAdjust="spacingAndGlyphs">0.91590</text>
<text x="1853.5" y="204.3" font-size="14" fill="#000" textLength="45.5" lengthAdjust="spacingAndGlyphs">0.91525</text>
<text x="1853.5" y="239.4" font-size="14" fill="#000" textLength="45.5" lengthAdjust="spacingAndGlyphs">0.91460</text>
<text x="1853.5" y="274.6" font-size="14" fill="#000" textLength="45.5" lengthAdjust="spacingAndGlyphs">0.91395</text>
<text x="1853.5" y="309.7" font-size="14" fill="#000" textLength="45.5" lengthAdjust="spacingAndGlyphs">0.91330</text>
<text x="1853.5" y="344.9" font-size="14" fill="#000" textLength="45.5" lengthAdjust="spacingAndGlyphs">0.91265</text>
<text x="1853.5" y="380.0" font-size="14" fill="#000" textLength="45.5" lengthAdjust="spacingAndGlyphs">0.91200</text>
<text x="1853.5" y="415.1" font-size="14" fill="#000" textLength="45.5" lengthAdjust="spacingAndGlyphs">0.91135</text>
<text x="1853.5" y="450.3" font-size="14" fill="#000" textLength="45.5" lengthAdjust="spacingAndGlyphs">0.91070</text>
<text x="1853.5" y="485.4" font-size="14" fill="#000" textLength="45.5" lengthAdjust="spacingAndGlyphs">0.91005</text>
<text x="1853.5" y="520.6" font-size="14" fill="#000" textLength="45.5" lengthAdjust="spacingAndGlyphs">0.90940</text>
<text x="1853.5" y="555.7" font-size="14" fill="#000" textLength="45.5" lengthAdjust="spacingAndGlyphs">0.90875</text>
<text x="1853.5" y="590.8" font-size="14" fill="#000" textLength="45.5" lengthAdjust="spacingAndGlyphs">0.90810</text>
<text x="1853.5" y="626.0" font-size="14" fill="#000" textLength="45.5" lengthAdjust="spacingAndGlyphs">0.90745</text>
<text x="1853.5" y="661.1" font-size="14" fill="#000" textLength="45.5" lengthAdjust="spacingAndGlyphs">0.90680</text>
<text x="1853.5" y="696.3" font-size="14" fill="#000" textLength="45.5" lengthAdjust="spacingAndGlyphs">0.90615</text>
<text x="1853.5" y="731.4" font-size="14" fill="#000" textLength="45.5" lengthAdjust="spacingAndGlyphs">0.90550</text>
<text x="1853.5" y="766.5" font-size="14" fill="#000" textLength="45.5" lengthAdjust="spacingAndGlyphs">0.90485</text>
<text x="1853.5" y="801.7" font-size="14" fill="#000" textLength="45.5" lengthAdjust="spacingAndGlyphs">0.90420</text>
<text x="1853.5" y="836.8" font-size="14" fill="#000" textLength="45.5" lengthAdjust="spacingAndGlyphs">0.90355</text>
<text x="1853.5" y="872.0" font-size="14" fill="#000" textLength="45.5" lengthAdjust="spacingAndGlyphs">0.90290</text>
<text x="1853.5" y="907.1" font-size="14" fill="#000" textLength="45.5" lengthAdjust="spacingAndGlyphs">0.90225</text>
<rect x="1850" y="424.5" width="54" height="15" fill="#e8641e"/>
<text x="1853.5" y="437.3" font-size="14" fill="#fff" textLength="45.5" lengthAdjust="spacingAndGlyphs">0.91094</text>
<rect x="4" y="938" width="1" height="4" fill="#000" shape-rendering="crispEdges"/>
<rect x="132" y="938" width="1" height="4" fill="#000" shape-rendering="crispEdges"/>
<rect x="260" y="938" width="1" height="4" fill="#000" shape-rendering="crispEdges"/>
<rect x="388" y="938" width="1" height="4" fill="#000" shape-rendering="crispEdges"/>
<rect x="516" y="938" width="1" height="4" fill="#000" shape-rendering="crispEdges"/>
<rect x="644" y="938" width="1" height="4" fill="#000" shape-rendering="crispEdges"/>
<rect x="772" y="938" width="1" height="4" fill="#000" shape-rendering="crispEdges"/>
<rect x="900" y="938" width="1" height="4" fill="#000" shape-rendering="crispEdges"/>
<rect x="1028" y="938" width="1" height="4" fill="#000" shape-rendering="crispEdges"/>
<rect x="1156" y="938" width="1" height="4" fill="#000" shape-rendering="crispEdges"/>
<rect x="1284" y="938" width="1" height="4" fill="#000" shape-rendering="crispEdges"/>
<rect x="1412" y="938" width="1" height="4" fill="#000" shape-rendering="crispEdges"/>
<text x="4.3" y="954" font-size="14" fill="#000" textLength="71.3" lengthAdjust="spacingAndGlyphs">23 Aug 2024</text>
<text x="132.3" y="954" font-size="14" fill="#000" textLength="74.9" lengthAdjust="spacingAndGlyphs">26 Aug 22:00</text>
<text x="260.3" y="954" font-size="14" fill="#000" textLength="74.9" lengthAdjust="spacingAndGlyphs">28 Aug 06:00</text>
<text x="388.3" y="954" font-size="14" fill="#000" textLength="74.9" lengthAdjust="spacingAndGlyphs">29 Aug 14:00</text>
<text x="516.3" y="954" font-size="14" fill="#000" textLength="74.9" lengthAdjust="spacingAndGlyphs">30 Aug 22:00</text>
<text x="644.3" y="954" font-size="14" fill="#000" textLength="68.5" lengthAdjust="spacingAndGlyphs">3 Sep 06:00</text>
<text x="772.3" y="954" font-size="14" fill="#000" textLength="68.5" lengthAdjust="spacingAndGlyphs">4 Sep 14:00</text>
<text x="900.3" y="954" font-size="14" fill="#000" textLength="68.5" lengthAdjust="spacingAndGlyphs">5 Sep 22:00</text>
<text x="1028.3" y="954" font-size="14" fill="#000" textLength="68.5" lengthAdjust="spacingAndGlyphs">9 Sep 06:00</text>
<text x="1156.3" y="954" font-size="14" fill="#000" textLength="75.6" lengthAdjust="spacingAndGlyphs">10 Sep 14:00</text>
<text x="1284.3" y="954" font-size="14" fill="#000" textLength="74.6" lengthAdjust="spacingAndGlyphs">11 Sep 22:00</text>
<text x="1412.3" y="954" font-size="14" fill="#000" textLength="75.6" lengthAdjust="spacingAndGlyphs">13 Sep 06:00</text>
<text x="64" y="27" font-size="13" fill="#000" textLength="269.6" lengthAdjust="spacingAndGlyphs" xml:space="preserve">AUDCAD, H1:  Australian Dollar vs Canadian  Dollar</text>
<g shape-rendering="crispEdges">
<rect x="10.5" y="14.5" width="17" height="13" rx="2" fill="#fde8e8" stroke="#d06070" stroke-width="1"/>
<rect x="19" y="15" width="8" height="12" fill="#bfe6f5"/>
<rect x="19" y="14.5" width="8.5" height="13" rx="2" fill="none" stroke="#2a7090" stroke-width="1"/>
<rect x="13" y="17" width="5" height="1" fill="#c05060"/><rect x="13" y="20" width="5" height="1" fill="#c05060"/><rect x="13" y="23" width="5" height="1" fill="#c05060"/>
<rect x="20" y="17" width="6" height="1" fill="#2a7090"/><rect x="20" y="20" width="6" height="1" fill="#2a7090"/><rect x="20" y="23" width="6" height="1" fill="#2a7090"/>
<rect x="37.5" y="17.5" width="7" height="11" rx="1.5" fill="#f7d8cc" stroke="#d06050" stroke-width="1"/>
<rect x="47.5" y="14.5" width="7" height="14" rx="1.5" fill="#bfe0f5" stroke="#2a7090" stroke-width="1"/>
</g>
<rect x="0" y="965" width="1920" height="1.6" fill="#2a2a2a"/>
<rect x="0" y="966.5" width="1920" height="25" fill="#efefef"/>
<rect x="0" y="991.5" width="1920" height="1.5" fill="#fafafa"/>
<rect x="0" y="993" width="1920" height="4" fill="#ececec"/>
<rect x="0" y="966" width="1.5" height="26" fill="#8a8a8a"/>
<rect x="88" y="969" width="1" height="20" fill="#505050"/>
<rect x="185" y="969" width="1" height="20" fill="#505050"/>
<rect x="298" y="969" width="1" height="20" fill="#505050"/>
<path d="M408.5 966 V990.5 H519.5 V966" fill="#fff" stroke="#1a1a1a" stroke-width="1.5"/>
<text x="18" y="985.5" font-size="14.5" fill="#707070" textLength="56" lengthAdjust="spacingAndGlyphs">US30,H4</text>
<text x="104.6" y="985.5" font-size="14.5" fill="#707070" textLength="65" lengthAdjust="spacingAndGlyphs">US500,M5</text>
<text x="198.7" y="985.5" font-size="14.5" fill="#707070" textLength="85" lengthAdjust="spacingAndGlyphs">NAS100,M30</text>
<text x="313.5" y="985.5" font-size="14.5" fill="#707070" textLength="79" lengthAdjust="spacingAndGlyphs">EURJPY,M30</text>
<text x="422.9" y="985.5" font-size="14.5" fill="#111" textLength="80.5" lengthAdjust="spacingAndGlyphs">AUDCAD,H1</text>
<path d="M1879 976 L1876.5 979.5 L1879 983" fill="none" stroke="#b4b4b4" stroke-width="1.5"/>
<path d="M1901 976 L1903.5 979.5 L1901 983" fill="none" stroke="#b4b4b4" stroke-width="1.5"/>
<rect x="1918" y="968" width="1" height="24" fill="#c8c8c8"/>
<defs><filter id="bl" x="-10%" y="-10%" width="120%" height="140%"><feGaussianBlur stdDeviation="1.2"/></filter></defs>
<path d="M1445 0 H1782 L1750 64 Q1738 88 1715 88 H1510 Q1488 88 1477 64 Z" fill="#f3f3f3" fill-opacity="0.93"/>
<g fill="none" stroke="#22e8f8" stroke-width="2.8" stroke-linejoin="miter"><path d="M1513.8,15.9 H1522.5 V36.5 H1513.8 Z"/><path d="M1531,29.2 H1544.3 V37.4 H1528.6 L1521.4,44 V53.8 H1544.3 V61.8 H1521 L1514.6,55.8 V45.5 Z"/></g>
<text x="1555.3" y="51.6" font-size="23" fill="#939393" textLength="170.5" lengthAdjust="spacingAndGlyphs" letter-spacing="1">TradingFinder</text>
</svg>
<div class="a" style="left:290px;top:47px;width:777px;height:673px;background:#f0f0f0;border:1px solid #555;box-shadow:0 1px 16px rgba(0,0,0,0.34)"></div>
<svg class="a" style="left:0;top:0" width="1920" height="997" viewBox="0 0 1920 997" font-family='"Liberation Sans", sans-serif'>
<g shape-rendering="crispEdges">
<rect x="291" y="48" width="775" height="40" fill="#fff"/>
<rect x="299.5" y="125.5" width="758" height="546" fill="#fff" stroke="#dadada" stroke-width="1"/>
<rect x="300.5" y="99.5" width="64" height="26" fill="#f0f0f0" stroke="#d9d9d9"/>
<rect x="419.5" y="99.5" width="51" height="26" fill="#f0f0f0" stroke="#d9d9d9"/>
<rect x="470.5" y="99.5" width="85" height="26" fill="#f0f0f0" stroke="#d9d9d9"/>
<rect x="364.5" y="97.5" width="55" height="29" fill="#fff" stroke="#d9d9d9"/>
<rect x="365" y="125" width="54" height="2" fill="#fff"/>
<rect x="311.5" y="138.5" width="604" height="514" fill="#fff" stroke="#7a7a7a"/>
<rect x="313" y="191.4" width="601" height="1" fill="#d6d6d6"/>
<rect x="313" y="192.2" width="601" height="27.4" fill="#e8e8e8"/>
<rect x="313" y="218.8" width="601" height="1" fill="#d6d6d6"/>
<rect x="313" y="246.2" width="601" height="1" fill="#d6d6d6"/>
<rect x="313" y="247.0" width="601" height="27.4" fill="#e8e8e8"/>
<rect x="313" y="273.6" width="601" height="1" fill="#d6d6d6"/>
<rect x="313" y="301.0" width="601" height="1" fill="#d6d6d6"/>
<rect x="313" y="301.8" width="601" height="27.4" fill="#e8e8e8"/>
<rect x="313" y="328.4" width="601" height="1" fill="#d6d6d6"/>
<rect x="313" y="355.8" width="601" height="1" fill="#d6d6d6"/>
<rect x="313" y="356.6" width="601" height="27.4" fill="#e8e8e8"/>
<rect x="313" y="383.2" width="601" height="1" fill="#d6d6d6"/>
<rect x="313" y="410.6" width="601" height="1" fill="#d6d6d6"/>
<rect x="313" y="411.4" width="601" height="27.4" fill="#e8e8e8"/>
<rect x="313" y="438.0" width="601" height="1" fill="#d6d6d6"/>
<rect x="313" y="465.4" width="601" height="1" fill="#d6d6d6"/>
<rect x="313" y="466.2" width="601" height="27.4" fill="#e8e8e8"/>
<rect x="313" y="492.8" width="601" height="1" fill="#d6d6d6"/>
<rect x="313" y="520.2" width="601" height="1" fill="#d6d6d6"/>
<rect x="313" y="521.0" width="601" height="27.4" fill="#e8e8e8"/>
<rect x="313" y="547.6" width="601" height="1" fill="#d6d6d6"/>
<rect x="612" y="139" width="1" height="410" fill="#cfcfcf"/>
</g>
<text x="317.5" y="183.1" font-size="14" fill="#9c9238" textLength="13.5" lengthAdjust="spacingAndGlyphs">ab</text>
<g shape-rendering="crispEdges"><rect x="319" y="198.2" width="9" height="2" fill="#d05060"/><rect x="319" y="201.2" width="9" height="2" fill="#3a7090"/><rect x="317.5" y="203.7" width="12" height="4.5" rx="2" fill="#80c8f0" stroke="#204a70" stroke-width="1.2"/><rect x="319" y="209.2" width="9" height="2" fill="#d05060"/><rect x="319" y="212.2" width="9" height="2" fill="#d05060"/></g>
<text x="317.5" y="237.9" font-size="14" fill="#9c9238" textLength="13.5" lengthAdjust="spacingAndGlyphs">ab</text>
<text x="317.3" y="265.3" font-size="13.5" fill="#2c5a80" textLength="13.5" lengthAdjust="spacingAndGlyphs">01</text>
<text x="317.3" y="292.7" font-size="13.5" fill="#2c5a80" textLength="13.5" lengthAdjust="spacingAndGlyphs">01</text>
<text x="317.3" y="320.1" font-size="13.5" fill="#2c5a80" textLength="13.5" lengthAdjust="spacingAndGlyphs">01</text>
<text x="317.3" y="347.5" font-size="13.5" fill="#2c5a80" textLength="13.5" lengthAdjust="spacingAndGlyphs">01</text>
<text x="317.3" y="374.9" font-size="13.5" fill="#2c5a80" textLength="13.5" lengthAdjust="spacingAndGlyphs">01</text>
<g fill="none" stroke="#1f9a3a" stroke-width="1.5" stroke-linecap="round"><path d="M321 406.5 V389.5"/><path d="M317 393.5 L321 389.5 L324.5 393.5"/><path d="M321 401.5 Q323 395.5 332 395.5"/><path d="M329 392.0 L332.5 395.5 L329 399.0"/></g>
<g fill="none" stroke="#1f9a3a" stroke-width="1.5" stroke-linecap="round"><path d="M321 433.9 V416.9"/><path d="M317 420.9 L321 416.9 L324.5 420.9"/><path d="M321 428.9 Q323 422.9 332 422.9"/><path d="M329 419.4 L332.5 422.9 L329 426.4"/></g>
<g fill="none" stroke="#1f9a3a" stroke-width="1.5" stroke-linecap="round"><path d="M321 461.3 V444.3"/><path d="M317 448.3 L321 444.3 L324.5 448.3"/><path d="M321 456.3 Q323 450.3 332 450.3"/><path d="M329 446.8 L332.5 450.3 L329 453.8"/></g>
<g fill="none" stroke="#1f9a3a" stroke-width="1.5" stroke-linecap="round"><path d="M321 488.7 V471.7"/><path d="M317 475.7 L321 471.7 L324.5 475.7"/><path d="M321 483.7 Q323 477.7 332 477.7"/><path d="M329 474.2 L332.5 477.7 L329 481.2"/></g>
<g fill="none" stroke="#1f9a3a" stroke-width="1.5" stroke-linecap="round"><path d="M321 516.0999999999999 V499.09999999999997"/><path d="M317 503.09999999999997 L321 499.09999999999997 L324.5 503.09999999999997"/><path d="M321 511.09999999999997 Q323 505.09999999999997 332 505.09999999999997"/><path d="M329 501.59999999999997 L332.5 505.09999999999997 L329 508.59999999999997"/></g>
<g fill="none" stroke="#1f9a3a" stroke-width="1.5" stroke-linecap="round"><path d="M321 543.5 V526.5"/><path d="M317 530.5 L321 526.5 L324.5 530.5"/><path d="M321 538.5 Q323 532.5 332 532.5"/><path d="M329 529.0 L332.5 532.5 L329 536.0"/></g>
<text x="340.4" y="184.1" font-size="13.2" fill="#111" textLength="181" lengthAdjust="spacingAndGlyphs">===== Display Setting =====</text>
<text x="617.5" y="184.1" font-size="13.2" fill="#111" textLength="181" lengthAdjust="spacingAndGlyphs">===== Display Setting =====</text>
<text x="340.4" y="211.5" font-size="13.2" fill="#111" textLength="39.6" lengthAdjust="spacingAndGlyphs">Theme</text>
<text x="617.5" y="211.5" font-size="13.2" fill="#111" textLength="66.7" lengthAdjust="spacingAndGlyphs">Light theme</text>
<text x="340.4" y="238.9" font-size="13.2" fill="#111" textLength="180" lengthAdjust="spacingAndGlyphs">===== ZigZag Setting =====</text>
<text x="617.5" y="238.9" font-size="13.2" fill="#111" textLength="179" lengthAdjust="spacingAndGlyphs">===== ZigZag Setting =====</text>
<text x="340.4" y="266.3" font-size="13.2" fill="#111" textLength="140" lengthAdjust="spacingAndGlyphs">candles to start checking</text>
<text x="617.5" y="266.3" font-size="13.2" fill="#111" textLength="20" lengthAdjust="spacingAndGlyphs">300</text>
<text x="340.4" y="293.7" font-size="13.2" fill="#111" textLength="142.5" lengthAdjust="spacingAndGlyphs">left check for pivot major</text>
<text x="617.5" y="293.7" font-size="13.2" fill="#111" textLength="6" lengthAdjust="spacingAndGlyphs">9</text>
<text x="340.4" y="321.1" font-size="13.2" fill="#111" textLength="150.8" lengthAdjust="spacingAndGlyphs">right check for pivot major</text>
<text x="617.5" y="321.1" font-size="13.2" fill="#111" textLength="6" lengthAdjust="spacingAndGlyphs">9</text>
<text x="340.4" y="348.5" font-size="13.2" fill="#111" textLength="141.7" lengthAdjust="spacingAndGlyphs">left check for pivot minor</text>
<text x="617.5" y="348.5" font-size="13.2" fill="#111" textLength="6" lengthAdjust="spacingAndGlyphs">3</text>
<text x="340.4" y="375.9" font-size="13.2" fill="#111" textLength="150" lengthAdjust="spacingAndGlyphs">right check for pivot minor</text>
<text x="617.5" y="375.9" font-size="13.2" fill="#111" textLength="6" lengthAdjust="spacingAndGlyphs">3</text>
<text x="340.4" y="403.3" font-size="13.2" fill="#111" textLength="153.3" lengthAdjust="spacingAndGlyphs">want to draw zigzag major</text>
<text x="617.5" y="403.3" font-size="13.2" fill="#111" textLength="21.7" lengthAdjust="spacingAndGlyphs">true</text>
<text x="340.4" y="430.7" font-size="13.2" fill="#111" textLength="264.6" lengthAdjust="spacingAndGlyphs">want to see major texts on chart (HH-HL-LL-...</text>
<text x="617.5" y="430.7" font-size="13.2" fill="#111" textLength="21.7" lengthAdjust="spacingAndGlyphs">true</text>
<text x="340.4" y="458.1" font-size="13.2" fill="#111" textLength="152" lengthAdjust="spacingAndGlyphs">want to draw zigzag minor</text>
<text x="617.5" y="458.1" font-size="13.2" fill="#111" textLength="21.7" lengthAdjust="spacingAndGlyphs">true</text>
<text x="340.4" y="485.5" font-size="13.2" fill="#111" textLength="263" lengthAdjust="spacingAndGlyphs">want to see minor texts on chart (HH-HL-LL-...</text>
<text x="617.5" y="485.5" font-size="13.2" fill="#111" textLength="21.7" lengthAdjust="spacingAndGlyphs">true</text>
<text x="340.4" y="512.9" font-size="13.2" fill="#111" textLength="263.8" lengthAdjust="spacingAndGlyphs">want to have support and resistance lines fo...</text>
<text x="617.5" y="512.9" font-size="13.2" fill="#111" textLength="21.7" lengthAdjust="spacingAndGlyphs">true</text>
<text x="340.4" y="540.3" font-size="13.2" fill="#111" textLength="263.8" lengthAdjust="spacingAndGlyphs">want to have support and resistance lines fo...</text>
<text x="617.5" y="540.3" font-size="13.2" fill="#111" textLength="21.7" lengthAdjust="spacingAndGlyphs">true</text>
<text x="319.6" y="158.6" font-size="13.2" fill="#111" textLength="46" lengthAdjust="spacingAndGlyphs">Variable</text>
<text x="618.7" y="158.6" font-size="13.2" fill="#111" textLength="32" lengthAdjust="spacingAndGlyphs">Value</text>
<text x="300.3" y="74.3" font-size="16.2" fill="#1a1a1a" textLength="172" lengthAdjust="spacingAndGlyphs">Zigzag Indicator MT5 1.05</text>
<rect x="913" y="66.5" width="12" height="1.5" fill="#111" shape-rendering="crispEdges"/>
<rect x="971.5" y="61.5" width="11.5" height="12" fill="none" stroke="#c4c4c4" stroke-width="1" shape-rendering="crispEdges"/>
<path d="M1030.5 61 L1042.5 74.5 M1042.5 61 L1030.5 74.5" stroke="#111" stroke-width="1.2" fill="none"/>
<text x="308.6" y="118" font-size="13.6" fill="#111" textLength="49.4" lengthAdjust="spacingAndGlyphs">Common</text>
<text x="375.8" y="116" font-size="13.6" fill="#111" textLength="34.4" lengthAdjust="spacingAndGlyphs">Inputs</text>
<text x="427.4" y="118" font-size="13.6" fill="#111" textLength="35.9" lengthAdjust="spacingAndGlyphs">Colors</text>
<text x="479.2" y="118" font-size="13.6" fill="#111" textLength="70.8" lengthAdjust="spacingAndGlyphs">Visualization</text>
<rect x="925.5" y="581.0" width="120" height="27.5" fill="#e1e1e1" stroke="#adadad" shape-rendering="crispEdges"/><text x="972.4" y="600" font-size="13.6" fill="#111" textLength="26" lengthAdjust="spacingAndGlyphs">Load</text>
<rect x="925.5" y="622.5" width="120" height="27" fill="#e1e1e1" stroke="#adadad" shape-rendering="crispEdges"/><text x="971.6" y="641.8" font-size="13.6" fill="#111" textLength="27" lengthAdjust="spacingAndGlyphs">Save</text>
<rect x="783" y="682" width="84" height="26" fill="#e1e1e1" stroke="#0a64c0" stroke-width="2" shape-rendering="crispEdges"/><text x="817.9" y="700.3" font-size="13.6" fill="#111" textLength="15" lengthAdjust="spacingAndGlyphs">OK</text>
<rect x="875.5" y="681.5" width="85" height="27" fill="#e1e1e1" stroke="#adadad" shape-rendering="crispEdges"/><text x="899.8" y="700.3" font-size="13.6" fill="#111" textLength="36.7" lengthAdjust="spacingAndGlyphs">Cancel</text>
<rect x="968.5" y="681.5" width="85" height="27" fill="#e1e1e1" stroke="#adadad" shape-rendering="crispEdges"/><text x="995.4" y="700.3" font-size="13.6" fill="#111" textLength="31.6" lengthAdjust="spacingAndGlyphs">Reset</text>
<rect x="1061" y="711" width="2" height="2" fill="#bdbdbd"/>
<rect x="1058" y="714" width="2" height="2" fill="#bdbdbd"/>
<rect x="1061" y="714" width="2" height="2" fill="#bdbdbd"/>
<rect x="1055" y="717" width="2" height="2" fill="#bdbdbd"/>
<rect x="1058" y="717" width="2" height="2" fill="#bdbdbd"/>
<rect x="1061" y="717" width="2" height="2" fill="#bdbdbd"/>
</svg>
</body></html>
